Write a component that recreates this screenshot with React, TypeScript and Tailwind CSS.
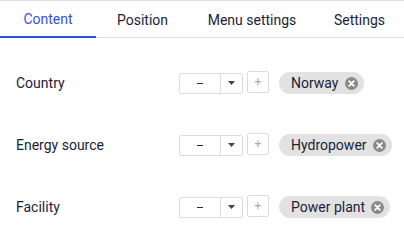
const tabs = [
  { label: "Content", w: "w-[96px]", active: true },
  { label: "Position", w: "w-[93px]", active: false },
  { label: "Menu settings", w: "w-[126px]", active: false },
  { label: "Settings", w: "w-[89px]", active: false },
];

const rows = [
  { label: "Country", value: "Norway" },
  { label: "Energy source", value: "Hydropower" },
  { label: "Facility", value: "Power plant" },
];

const RemoveIcon = () => (
  <svg width="13" height="13" viewBox="0 0 13 13" className="shrink-0">
    <circle cx="6.5" cy="6.5" r="6.5" fill="#8a8a8a" />
    <path d="M4.2 4.2 L8.8 8.8 M8.8 4.2 L4.2 8.8" stroke="#fff" strokeWidth="1.8" strokeLinecap="round" />
  </svg>
);

const App = () => {
  return (
    <div className="w-[404px] h-[240px] bg-white overflow-hidden font-['Roboto',sans-serif] text-[#1b1d3a]">
      <div className="flex h-[38px] border-t border-b border-[#dedede]">
        {tabs.map((t) => (
          <div
            key={t.label}
            className={`${t.w} shrink-0 flex items-center justify-center pt-[2px] text-[14px] ${
              t.active ? "text-[#3550e8] border-b-2 border-[#2f4de6] -mb-px" : ""
            }`}
          >
            {t.label}
          </div>
        ))}
      </div>
      <div className="pt-[14px]">
        {rows.map((r) => (
          <div key={r.label} className="flex items-center h-[62px]">
            <div className="w-[179px] pl-4 text-[14px]">{r.label}</div>
            <div className="flex items-center h-[21px] w-[64px] border border-[#dcdcdc] rounded-[2px]">
              <div className="flex-1 flex items-center justify-center">
                <div className="w-[6px] h-px bg-[#2a2a3a]" />
              </div>
              <div className="w-[22px] h-full border-l border-[#dcdcdc] flex items-center justify-center">
                <svg width="7" height="4" viewBox="0 0 7 4">
                  <path d="M0 0 H7 L3.5 4 Z" fill="#444" />
                </svg>
              </div>
            </div>
            <div className="ml-1 w-[22px] h-[22px] -mt-[2px] border border-[#dcdcdc] rounded-[2px] flex items-center justify-center text-[12px] text-[#aaa]">
              +
            </div>
            <div className="ml-[10px] flex items-center gap-[6px] h-[22px] pl-3 pr-[6px] rounded-full bg-[#e2e2e2] text-[14px]">
              <span>{r.value}</span>
              <RemoveIcon />
            </div>
          </div>
        ))}
      </div>
    </div>
  );
};

export default App;
